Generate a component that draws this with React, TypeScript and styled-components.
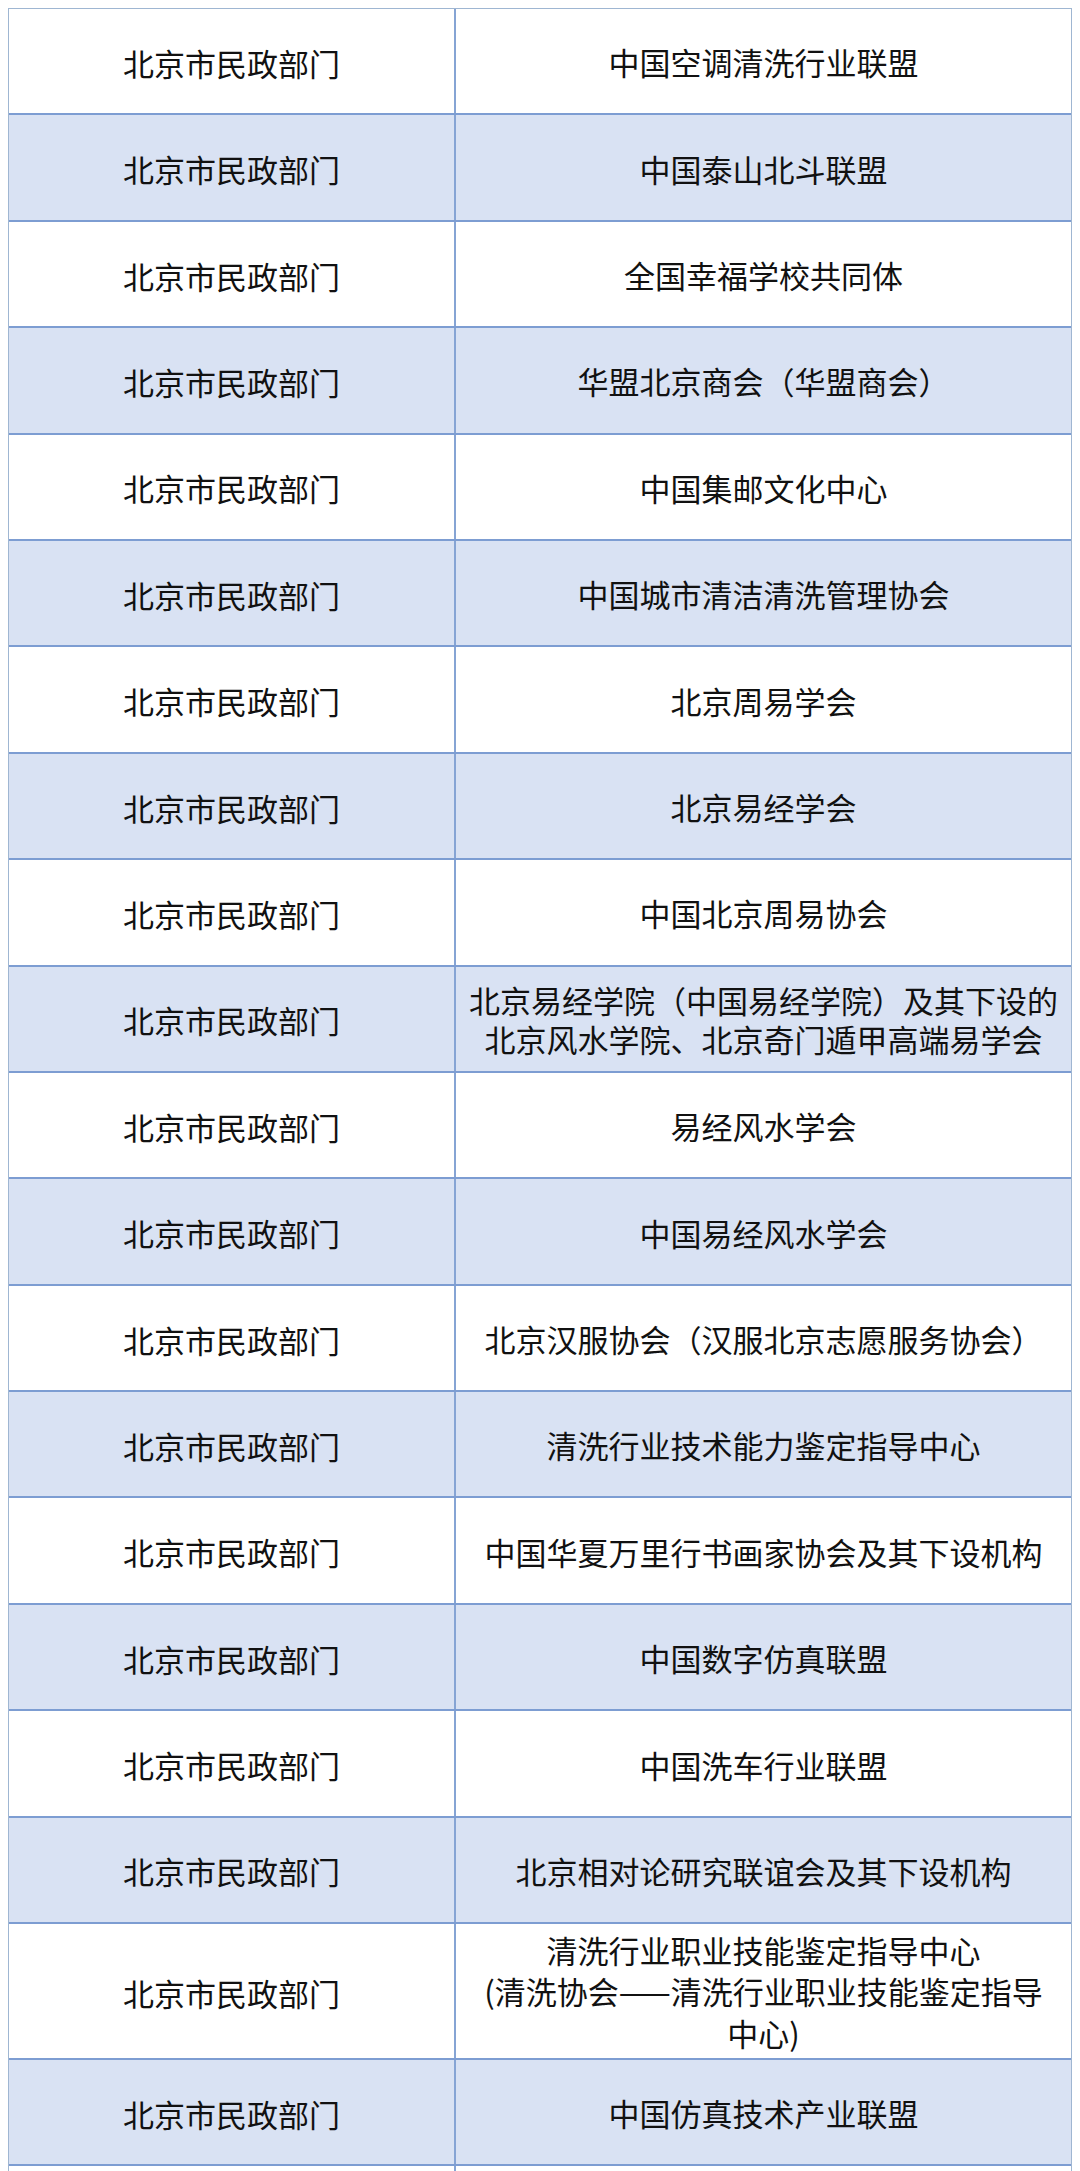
import styled, { createGlobalStyle } from "styled-components";

const GlobalStyle = createGlobalStyle`
  html, body {
    margin: 0;
    padding: 0;
    background: #fff;
  }
  body {
    font-family: "Noto Sans CJK SC", "Noto Sans", sans-serif;
    color: #111;
  }
`;

const DEPT = "北京市民政部门";

const rows: { lines: string[]; tall?: boolean; blank?: boolean }[] = [
  { lines: ["中国空调清洗行业联盟"] },
  { lines: ["中国泰山北斗联盟"] },
  { lines: ["全国幸福学校共同体"] },
  { lines: ["华盟北京商会（华盟商会）"] },
  { lines: ["中国集邮文化中心"] },
  { lines: ["中国城市清洁清洗管理协会"] },
  { lines: ["北京周易学会"] },
  { lines: ["北京易经学会"] },
  { lines: ["中国北京周易协会"] },
  {
    lines: [
      "北京易经学院（中国易经学院）及其下设的",
      "北京风水学院、北京奇门遁甲高端易学会",
    ],
  },
  { lines: ["易经风水学会"] },
  { lines: ["中国易经风水学会"] },
  { lines: ["北京汉服协会（汉服北京志愿服务协会）"] },
  { lines: ["清洗行业技术能力鉴定指导中心"] },
  { lines: ["中国华夏万里行书画家协会及其下设机构"] },
  { lines: ["中国数字仿真联盟"] },
  { lines: ["中国洗车行业联盟"] },
  { lines: ["北京相对论研究联谊会及其下设机构"] },
  {
    lines: [
      "清洗行业职业技能鉴定指导中心",
      "(清洗协会——清洗行业职业技能鉴定指导",
      "中心)",
    ],
    tall: true,
  },
  { lines: ["中国仿真技术产业联盟"] },
  // next row only peeks in at the bottom edge
  { lines: [], blank: true },
];

const App = () => {
  return (
    <StPage>
      <GlobalStyle />
      <StTable>
        {rows.map((row, index) => (
          <StRow key={index} $shaded={index % 2 === 1} $tall={row.tall}>
            <StDeptCell>{row.blank ? null : DEPT}</StDeptCell>
            <StNameCell $tall={row.tall}>
              {row.lines.map((line, i) => (
                <StLine key={i}>{line}</StLine>
              ))}
            </StNameCell>
          </StRow>
        ))}
      </StTable>
    </StPage>
  );
};
export default App;

const StPage = styled.div`
  height: 2171px;
  overflow: hidden;
  padding: 8px 0 0 8px;
  box-sizing: border-box;
`;
const StTable = styled.div`
  width: 1064px;
  box-sizing: border-box;
  border: 1.5px solid #9fb6d2;
  border-bottom: 0;
`;
const StRow = styled.div<{ $shaded: boolean; $tall?: boolean }>`
  display: grid;
  grid-template-columns: 447px 1fr;
  height: ${(p) => (p.$tall ? "136px" : "106.4px")};
  box-sizing: border-box;
  border-bottom: 2px solid #7d9dd2;
  background: ${(p) => (p.$shaded ? "#d9e2f3" : "#ffffff")};
`;
const StDeptCell = styled.div`
  display: flex;
  align-items: center;
  justify-content: center;
  border-right: 2px solid #86a4d4;
  font-size: 31px;
  line-height: 1.25;
  padding-top: 4px;
  box-sizing: border-box;
`;
const StNameCell = styled.div<{ $tall?: boolean }>`
  display: flex;
  flex-direction: column;
  align-items: center;
  justify-content: center;
  font-size: 31px;
  line-height: ${(p) => (p.$tall ? 1.33 : 1.25)};
  padding-top: ${(p) => (p.$tall ? "0" : "3px")};
  text-align: center;
  box-sizing: border-box;
`;
const StLine = styled.span`
  display: block;
  white-space: nowrap;
`;
